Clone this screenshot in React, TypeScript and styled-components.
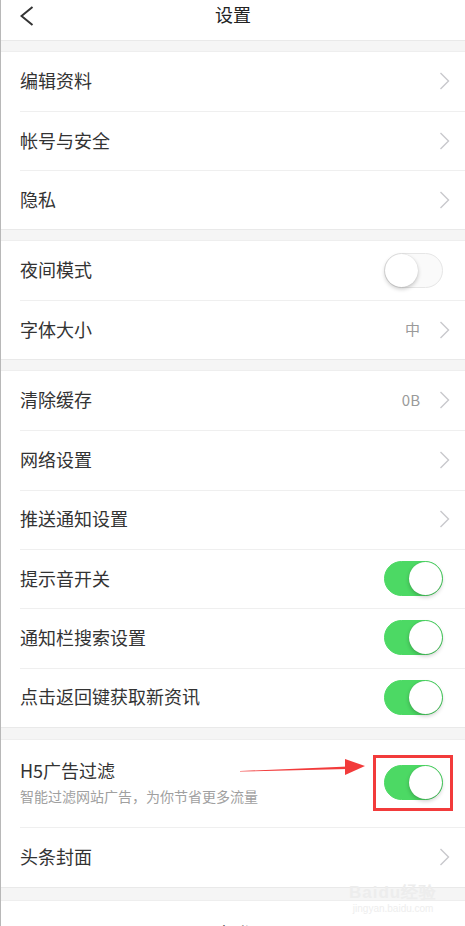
import React from "react";
import styled, { createGlobalStyle } from "styled-components";

const Global = createGlobalStyle`
  html, body { margin: 0; padding: 0; background: #fff; }
  body { font-family: "Noto Sans CJK SC", "Noto Sans", "Liberation Sans", sans-serif; }
`;

const Page = styled.div`
  position: relative;
  width: 465px;
  height: 926px;
  overflow: hidden;
  background: #fff;
  border-left: 1px solid #b8b8b8;
  box-sizing: border-box;
`;

const Header = styled.div`
  height: 40px;
  display: flex;
  align-items: flex-start;
  justify-content: center;
  position: relative;
`;

const BackBtn = styled.div`
  position: absolute;
  left: 19px;
  top: 6px;
  width: 14px;
  height: 20px;
  display: flex;
`;

const Title = styled.div`
  font-size: 18px;
  color: #222;
  line-height: 20px;
  margin-top: 4px;
`;

const Band = styled.div<{ $h?: number }>`
  height: ${(p) => p.$h ?? 12}px;
  box-sizing: border-box;
  background: #f5f5f5;
  border-top: 1px solid #e9e9e9;
  border-bottom: 1px solid #eeeeee;
`;

const Group = styled.div`
  background: #fff;
`;

const Row = styled.div<{ $h?: number }>`
  position: relative;
  margin-left: 19px;
  padding-right: 15px;
  padding-bottom: 1px;
  height: ${(p) => p.$h ?? 59}px;
  box-sizing: border-box;
  display: flex;
  align-items: center;
  & + & {
    border-top: 1px solid #efefef;
  }
`;

const Label = styled.div`
  flex: 1;
  font-size: 18px;
  color: #333;
  line-height: 22px;
  margin-top: -2px;
`;

const TextCol = styled.div`
  flex: 1;
  display: flex;
  flex-direction: column;
`;

const Sub = styled.div`
  margin-top: 6px;
  font-size: 14px;
  line-height: 18px;
  color: #a0a0a0;
`;

const Value = styled.span`
  font-size: 15px;
  color: #9a9a9a;
  margin-right: 19px;
  margin-top: -2px;
`;

const Track = styled.div<{ $on: boolean }>`
  position: relative;
  width: 59px;
  height: 35px;
  border-radius: 18px;
  box-sizing: border-box;
  margin-right: 7px;
  background: ${(p) => (p.$on ? "#4cd964" : "#fafafa")};
  border: 1px solid ${(p) => (p.$on ? "#4cd964" : "#e6e6e6")};
`;

const Knob = styled.div<{ $on: boolean }>`
  position: absolute;
  top: 0px;
  left: ${(p) => (p.$on ? "24px" : "0px")};
  width: 33px;
  height: 33px;
  border-radius: 50%;
  background: #fff;
  box-shadow: 0 2px 4px rgba(0, 0, 0, 0.22), 0 0 1px rgba(0, 0, 0, 0.15);
`;

const Highlight = styled.div`
  position: absolute;
  left: -11px;
  top: -10px;
  width: 80px;
  height: 56px;
  box-sizing: border-box;
  border: 3px solid #f23b3b;
`;

const ToggleWrap = styled.div`
  position: relative;
`;

const ArrowSvg = styled.svg`
  position: absolute;
  left: 220px;
  top: 16px;
  overflow: visible;
`;

const BottomRow = styled.div`
  height: 59px;
  padding-top: 6px;
  box-sizing: border-box;
  display: flex;
  align-items: center;
  justify-content: center;
  font-size: 18px;
  color: #333;
`;

const Watermark = styled.div`
  position: absolute;
  left: 348px;
  top: 883px;
  display: flex;
  flex-direction: column;
  align-items: center;
  color: #ededed;
  font-family: "Liberation Sans", sans-serif;
  pointer-events: none;
`;

const WmTop = styled.div`
  font-size: 17px;
  font-weight: bold;
  line-height: 20px;
  letter-spacing: 1px;
`;

const WmBottom = styled.div`
  font-size: 10px;
  line-height: 12px;
  color: #eeeeee;
`;

const Chevron = () => (
  <svg width="11" height="18" viewBox="0 0 11 18">
    <polyline points="1.5,1 9.5,9 1.5,17" fill="none" stroke="#c8c8cc" strokeWidth="1.4" />
  </svg>
);

const Toggle = ({ on }: { on: boolean }) => (
  <Track $on={on}>
    <Knob $on={on} />
  </Track>
);

type Item = { label: string; value?: string; toggle?: boolean; on?: boolean };

const NavRow = ({ item, h }: { item: Item; h?: number }) => (
  <Row $h={h}>
    <Label>{item.label}</Label>
    {item.value && <Value>{item.value}</Value>}
    {item.toggle ? <Toggle on={!!item.on} /> : <Chevron />}
  </Row>
);

const g1: Item[] = [{ label: "编辑资料" }, { label: "帐号与安全" }, { label: "隐私" }];
const g2: Item[] = [{ label: "夜间模式", toggle: true, on: false }, { label: "字体大小", value: "中" }];
const g3: Item[] = [
  { label: "清除缓存", value: "0B" },
  { label: "网络设置" },
  { label: "推送通知设置" },
  { label: "提示音开关", toggle: true, on: true },
  { label: "通知栏搜索设置", toggle: true, on: true },
  { label: "点击返回键获取新资讯", toggle: true, on: true },
];

export default function App() {
  return (
    <Page>
      <Global />
      <Header>
        <BackBtn>
          <svg width="14" height="20" viewBox="0 0 14 20">
            <polyline points="12.5,1 1.5,10 12.5,19" fill="none" stroke="#333" strokeWidth="2" />
          </svg>
        </BackBtn>
        <Title>设置</Title>
      </Header>
      <Band />
      <Group>
        {g1.map((it) => (
          <NavRow key={it.label} item={it} />
        ))}
      </Group>
      <Band />
      <Group>
        {g2.map((it) => (
          <NavRow key={it.label} item={it} />
        ))}
      </Group>
      <Band />
      <Group>
        {g3.map((it) => (
          <NavRow key={it.label} item={it} h={59.33} />
        ))}
      </Group>
      <Band $h={13} />
      <Group>
        <Row $h={87}>
          <TextCol>
            <Label>H5广告过滤</Label>
            <Sub>智能过滤网站广告，为你节省更多流量</Sub>
          </TextCol>
          <ToggleWrap>
            <Toggle on={true} />
            <Highlight />
          </ToggleWrap>
          <ArrowSvg width="125" height="20" viewBox="0 0 125 20">
            <polygon points="0,15 108,10.5 108,13 0,15.6" fill="#f23b3b" />
            <polygon points="105,3 125,10 105,19" fill="#f23b3b" />
          </ArrowSvg>
        </Row>
        <Row $h={60}>
          <Label>头条封面</Label>
          <Chevron />
        </Row>
      </Group>
      <Band $h={14} />
      <BottomRow>退出登录</BottomRow>
      <Watermark>
        <WmTop>Baidu经验</WmTop>
        <WmBottom>jingyan.baidu.com</WmBottom>
      </Watermark>
    </Page>
  );
}
